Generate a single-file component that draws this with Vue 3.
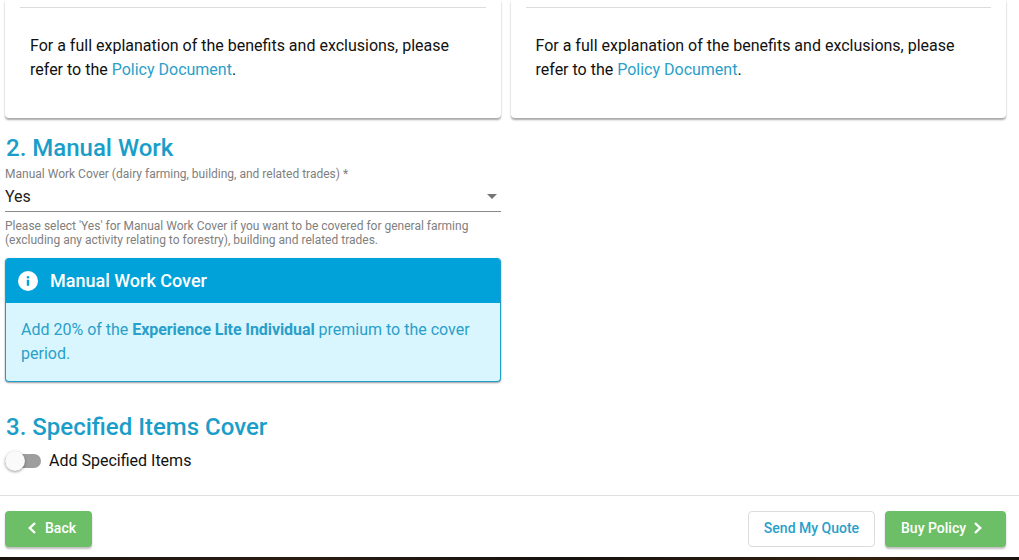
<script setup>
const cards = [1, 2]
</script>

<template>
  <div class="page">
    <div class="quote">
      <div class="cards">
        <div v-for="card in cards" :key="card" class="card">
          <hr class="card-rule" />
          <p class="card-text">
            For a full explanation of the benefits and exclusions, please refer to the
            <a class="link">Policy Document</a>.
          </p>
        </div>
      </div>

      <div class="column">
        <h2 class="section-title manual-title">2. Manual Work</h2>
        <label class="field-label">Manual Work Cover (dairy farming, building, and related trades) *</label>
        <div class="select">
          <span>Yes</span>
          <span class="select-arrow"></span>
        </div>
        <p class="field-hint">
          Please select 'Yes' for Manual Work Cover if you want to be covered for general farming
          (excluding any activity relating to forestry), building and related trades.
        </p>

        <div class="notice">
          <div class="notice-head">
            <svg class="notice-icon" viewBox="0 0 20 20" width="20" height="20">
              <circle cx="10" cy="10" r="10" fill="#fff" />
              <rect x="8.8" y="8.8" width="2.4" height="6" fill="#00a2d9" />
              <rect x="8.8" y="5.2" width="2.4" height="2.2" fill="#00a2d9" />
            </svg>
            <span>Manual Work Cover</span>
          </div>
          <div class="notice-body">
            Add 20% of the <strong>Experience Lite Individual</strong> premium to the cover period.
          </div>
        </div>

        <h2 class="section-title items-title">3. Specified Items Cover</h2>
        <div class="toggle-row">
          <span class="toggle"><span class="toggle-thumb"></span></span>
          <span>Add Specified Items</span>
        </div>
      </div>
    </div>

    <div class="actions">
      <button class="btn btn-green back-btn">
        <svg viewBox="0 0 10 14" width="10" height="14">
          <path d="M8 2 L2.8 7 L8 12" fill="none" stroke="currentColor" stroke-width="2.4" />
        </svg>
        Back
      </button>
      <div class="actions-right">
        <button class="btn btn-outline">Send My Quote</button>
        <button class="btn btn-green buy-btn">
          Buy Policy
          <svg viewBox="0 0 10 14" width="10" height="14">
            <path d="M2 2 L7.2 7 L2 12" fill="none" stroke="currentColor" stroke-width="2.4" />
          </svg>
        </button>
      </div>
    </div>
    <div class="backdrop"></div>
  </div>
</template>

<style scoped>
.page {
  width: 1019px;
  height: 560px;
  overflow: hidden;
  background: #fff;
  display: flex;
  flex-direction: column;
  font-family: Roboto, "Liberation Sans", sans-serif;
  color: #212121;
}

.quote {
  flex: 1;
  padding: 0 13px 0 5px;
}

.cards {
  display: grid;
  grid-template-columns: 495.5px 495.5px;
  gap: 10px;
}

.card {
  height: 118px;
  box-sizing: border-box;
  padding: 7px 15px 0;
  background: #fff;
  border-radius: 0 0 4px 4px;
  box-shadow: 0 2px 2px rgba(0, 0, 0, 0.35);
}

.card-rule {
  margin: 0;
  border: 0;
  border-top: 1px solid #dcdcdc;
}

.card-text {
  margin: 26px 10px 0;
  font-size: 16px;
  line-height: 24px;
  color: #111;
}

.link {
  color: #2a9fc9;
}

.column {
  width: 496px;
}

.section-title {
  margin: 0;
  padding-left: 1px;
  font-size: 24px;
  font-weight: 500;
  line-height: 30px;
  color: #1a9ec9;
}

.manual-title {
  margin-top: 15px;
}

.field-label {
  display: block;
  margin-top: 4px;
  font-size: 12px;
  line-height: 14px;
  color: #808080;
}

.select {
  display: flex;
  justify-content: space-between;
  align-items: center;
  height: 31px;
  box-sizing: border-box;
  border-bottom: 1px solid #8a8a8a;
  font-size: 16px;
}

.select-arrow {
  margin-right: 4px;
  border-left: 5px solid transparent;
  border-right: 5px solid transparent;
  border-top: 5px solid #757575;
}

.field-hint {
  margin: 7px 0 0;
  font-size: 12px;
  line-height: 14px;
  color: #808080;
}

.notice {
  margin-top: 11px;
  border-radius: 4px;
  overflow: hidden;
  background: #d9f6ff;
  border: 1px solid #1f9cc7;
  border-top: 0;
  box-shadow: 0 1px 2px rgba(0, 0, 0, 0.4);
}

.notice-head {
  display: flex;
  align-items: center;
  gap: 12px;
  height: 45px;
  margin: 0 -1px;
  padding-left: 13px;
  background: #00a2d9;
  color: #fff;
  font-size: 18px;
  font-weight: 500;
}

.notice-body {
  padding: 15px 15px 15px;
  font-size: 16px;
  line-height: 24px;
  color: #2a9fc9;
}

.notice-body strong {
  letter-spacing: -0.08px;
}

.items-title {
  margin-top: 30px;
}

.toggle-row {
  display: flex;
  align-items: center;
  gap: 8px;
  margin-top: 9px;
  font-size: 16px;
  line-height: 20px;
  color: #111;
}

.toggle {
  position: relative;
  display: block;
  width: 36px;
  height: 14px;
  border-radius: 7px;
  background: #9e9e9e;
}

.toggle-thumb {
  position: absolute;
  left: 0;
  top: -3px;
  width: 20px;
  height: 20px;
  border-radius: 50%;
  background: #fafafa;
  box-shadow: 0 1px 3px rgba(0, 0, 0, 0.4);
}

.actions {
  display: flex;
  justify-content: space-between;
  align-items: flex-start;
  height: 62px;
  box-sizing: border-box;
  padding: 15px 13px 0 5px;
  border-top: 1px solid #e0e0e0;
}

.actions-right {
  display: flex;
  gap: 10px;
}

.btn {
  display: flex;
  align-items: center;
  justify-content: center;
  height: 36px;
  box-sizing: border-box;
  padding-bottom: 3px;
  border-radius: 4px;
  border: 0;
  font-family: inherit;
  font-size: 14px;
  font-weight: 500;
}

.btn-green {
  justify-content: flex-start;
  background: #6cbf67;
  color: #fff;
  box-shadow: 0 2px 2px rgba(0, 0, 0, 0.25);
}

.back-btn {
  width: 87px;
  gap: 8px;
  padding-left: 22px;
}

.buy-btn {
  width: 121px;
  gap: 7px;
  padding-left: 16px;
}

.btn-outline {
  width: 127px;
  background: #fff;
  color: #2a9fc9;
  border: 1px solid #dcdcdc;
}

.backdrop {
  height: 3px;
  background: linear-gradient(90deg, #1a1410 0%, #2a1c12 30%, #15110e 55%, #33210f 85%, #1a1410 100%);
}
</style>

<style>
body {
  margin: 0;
}
</style>
